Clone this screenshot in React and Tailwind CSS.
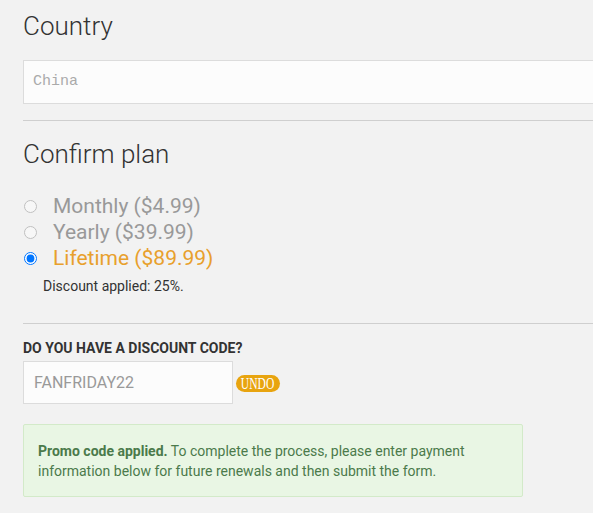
export default function App() {
  return (
    <div className="min-h-[513px] w-[593px] overflow-hidden bg-[#f2f2f2] pl-[23px] pt-[8px] font-['Roboto',sans-serif] text-[#333]">
      <h2 className="text-[26px] font-light leading-[36px] text-[#333]">Country</h2>
      <div className="mt-[16px] flex h-[44px] w-[600px] items-center border border-[#dcdcdc] bg-[#fcfcfc] pl-[9px] font-['Liberation_Mono',monospace] text-[15px] text-[#aaa]">
        China
      </div>
      <div className="mt-[16px] h-px w-[600px] bg-[#cfcfcf]" />
      <h2 className="mt-[15px] text-[26px] font-light leading-[36px] text-[#333]">Confirm plan</h2>
      <div className="mt-[21px] flex flex-col">
        {[
          ["Monthly ($4.99)", false],
          ["Yearly ($39.99)", false],
          ["Lifetime ($89.99)", true],
        ].map(([label, checked]) => (
          <label key={label} className="flex h-[26px] items-center">
            <input
              type="radio"
              name="plan"
              defaultChecked={checked}
              className={`m-0 ml-[1px] h-[13px] w-[13px] ${checked ? "" : "opacity-40"}`}
            />
            <span className={`ml-[16px] text-[21px] leading-[26px] ${checked ? "text-[#e8a02c]" : "text-[#999]"}`}>{label}</span>
          </label>
        ))}
      </div>
      <p className="mt-[6px] pl-[20px] text-[14px] leading-[18px] text-[#333]">Discount applied: 25%.</p>
      <div className="mt-[28px] h-px w-[600px] bg-[#cfcfcf]" />
      <p className="mt-[16px] text-[14px] font-bold uppercase leading-[16px] text-[#333]">Do you have a discount code?</p>
      <div className="mt-[5px] flex items-center">
        <div className="flex h-[43px] w-[210px] items-center border border-[#dcdcdc] bg-[#fcfcfc] pl-[10px] text-[16px] text-[#999]">FANFRIDAY22</div>
        <span className="ml-[3px] mt-[1px] flex h-[17px] w-[44px] items-center justify-center overflow-hidden rounded-full bg-[#e8a40f] font-['Liberation_Serif',serif] text-[17px] leading-none text-white">
          <span className="inline-block [transform:scaleX(0.68)]">UNDO</span>
        </span>
      </div>
      <div className="mt-[20px] w-[500px] rounded-[2px] border border-[#d3eac9] bg-[#e9f6e4] px-[14px] pb-[15px] pt-[16px] text-[14px] leading-[20px] text-[#4b7a4b]">
        <b className="font-bold">Promo code applied.</b> To complete the process, please enter payment information below for future renewals and then submit the form.
      </div>
    </div>
  );
}
